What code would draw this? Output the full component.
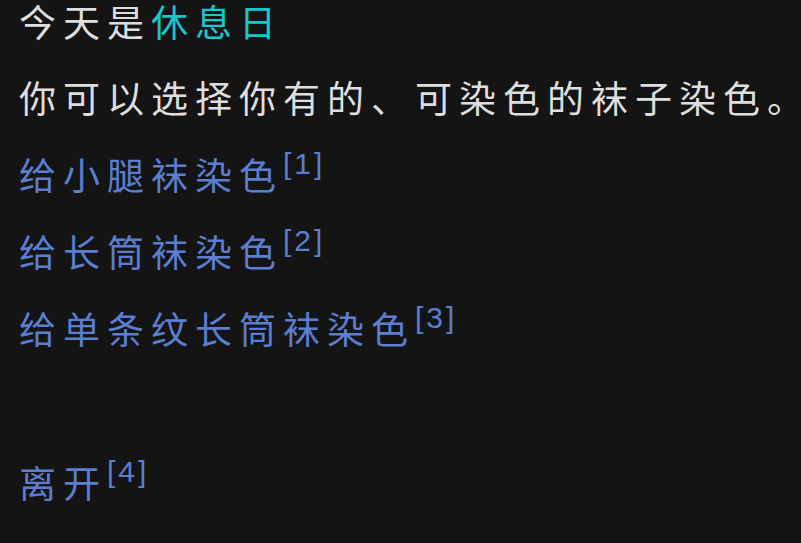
import React from "react";

const choices = [
  { label: "给小腿袜染色", key: 1 },
  { label: "给长筒袜染色", key: 2 },
  { label: "给单条纹长筒袜染色", key: 3 },
];

const Hotkey = ({ n }) => (
  <sup className="text-[30px] -top-[16px] tracking-[3px] font-['Liberation_Sans',sans-serif]">
    [{n}]
  </sup>
);

export default function App() {
  return (
    <div className="min-h-[543px] w-full bg-[#141414] pl-[19px] text-[37px] tracking-[7px] whitespace-nowrap text-[#dedede] font-['Noto_Sans_CJK_SC','Noto_Sans',sans-serif]">
      {/* day header */}
      <div className="leading-[42px] mb-[17px]">
        今天是<span className="text-[#19c6cb]">休息日</span>
      </div>

      <div className="leading-[77px]">
        你可以选择你有的、可染色的袜子染色
        <span className="tracking-normal -mr-[6px]">。</span>
      </div>

      {/* options */}
      {choices.map((c) => (
        <div key={c.key} className="leading-[77px] text-[#5b7ed0]">
          {c.label}
          <Hotkey n={c.key} />
        </div>
      ))}

      <div className="h-[77px]" />

      <div className="leading-[77px] text-[#5b7ed0]">
        离开
        <Hotkey n={4} />
      </div>
    </div>
  );
}
